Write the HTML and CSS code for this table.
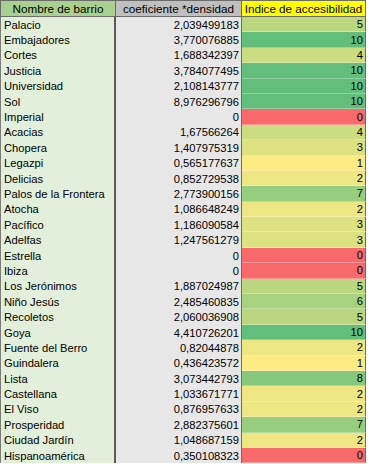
FILE: index.html
```html
<!DOCTYPE html>
<html lang="es">
<head>
<meta charset="utf-8">
<link rel="stylesheet" href="styles.css">
</head>
<body>
<div class="sheet">
  <div class="row head">
    <div class="cell h-name">Nombre de barrio</div>
    <div class="cell h-coef">coeficiente *densidad</div>
    <div class="cell h-idx">Indice de accesibilidad</div>
  </div>
  <div class="row"><div class="cell name">Palacio</div><div class="cell coef">2,039499183</div><div class="cell idx" style="background:#BAD780">5</div></div>
  <div class="row"><div class="cell name">Embajadores</div><div class="cell coef">3,770076885</div><div class="cell idx" style="background:#63BE7B">10</div></div>
  <div class="row"><div class="cell name">Cortes</div><div class="cell coef">1,688342397</div><div class="cell idx" style="background:#CBDC81">4</div></div>
  <div class="row"><div class="cell name">Justicia</div><div class="cell coef">3,784077495</div><div class="cell idx" style="background:#63BE7B">10</div></div>
  <div class="row"><div class="cell name">Universidad</div><div class="cell coef">2,108143777</div><div class="cell idx" style="background:#63BE7B">10</div></div>
  <div class="row"><div class="cell name">Sol</div><div class="cell coef">8,976296796</div><div class="cell idx" style="background:#63BE7B">10</div></div>
  <div class="row"><div class="cell name">Imperial</div><div class="cell coef">0</div><div class="cell idx" style="background:#F8696B">0</div></div>
  <div class="row"><div class="cell name">Acacias</div><div class="cell coef">1,67566264</div><div class="cell idx" style="background:#CBDC81">4</div></div>
  <div class="row"><div class="cell name">Chopera</div><div class="cell coef">1,407975319</div><div class="cell idx" style="background:#DCE182">3</div></div>
  <div class="row"><div class="cell name">Legazpi</div><div class="cell coef">0,565177637</div><div class="cell idx" style="background:#FFEB84">1</div></div>
  <div class="row"><div class="cell name">Delicias</div><div class="cell coef">0,852729538</div><div class="cell idx" style="background:#EEE683">2</div></div>
  <div class="row"><div class="cell name">Palos de la Frontera</div><div class="cell coef">2,773900156</div><div class="cell idx" style="background:#97CD7E">7</div></div>
  <div class="row"><div class="cell name">Atocha</div><div class="cell coef">1,086648249</div><div class="cell idx" style="background:#EEE683">2</div></div>
  <div class="row"><div class="cell name">Pacífico</div><div class="cell coef">1,186090584</div><div class="cell idx" style="background:#DCE182">3</div></div>
  <div class="row"><div class="cell name">Adelfas</div><div class="cell coef">1,247561279</div><div class="cell idx" style="background:#DCE182">3</div></div>
  <div class="row"><div class="cell name">Estrella</div><div class="cell coef">0</div><div class="cell idx" style="background:#F8696B">0</div></div>
  <div class="row"><div class="cell name">Ibiza</div><div class="cell coef">0</div><div class="cell idx" style="background:#F8696B">0</div></div>
  <div class="row"><div class="cell name">Los Jerónimos</div><div class="cell coef">1,887024987</div><div class="cell idx" style="background:#BAD780">5</div></div>
  <div class="row"><div class="cell name">Niño Jesús</div><div class="cell coef">2,485460835</div><div class="cell idx" style="background:#A8D27F">6</div></div>
  <div class="row"><div class="cell name">Recoletos</div><div class="cell coef">2,060036908</div><div class="cell idx" style="background:#BAD780">5</div></div>
  <div class="row"><div class="cell name">Goya</div><div class="cell coef">4,410726201</div><div class="cell idx" style="background:#63BE7B">10</div></div>
  <div class="row"><div class="cell name">Fuente del Berro</div><div class="cell coef">0,82044878</div><div class="cell idx" style="background:#EEE683">2</div></div>
  <div class="row"><div class="cell name">Guindalera</div><div class="cell coef">0,436423572</div><div class="cell idx" style="background:#FFEB84">1</div></div>
  <div class="row"><div class="cell name">Lista</div><div class="cell coef">3,073442793</div><div class="cell idx" style="background:#86C87D">8</div></div>
  <div class="row"><div class="cell name">Castellana</div><div class="cell coef">1,033671771</div><div class="cell idx" style="background:#EEE683">2</div></div>
  <div class="row"><div class="cell name">El Viso</div><div class="cell coef">0,876957633</div><div class="cell idx" style="background:#EEE683">2</div></div>
  <div class="row"><div class="cell name">Prosperidad</div><div class="cell coef">2,882375601</div><div class="cell idx" style="background:#97CD7E">7</div></div>
  <div class="row"><div class="cell name">Ciudad Jardín</div><div class="cell coef">1,048687159</div><div class="cell idx" style="background:#EEE683">2</div></div>
  <div class="row"><div class="cell name">Hispanoamérica</div><div class="cell coef">0,350108323</div><div class="cell idx" style="background:#F8696B">0</div></div>
</div>
</body>
</html>
```

FILE: styles.css
```css
html, body {
  margin: 0;
  padding: 0;
  background: #ffffff;
}

body {
  font-family: "Liberation Sans", Arial, sans-serif;
  font-size: 11.2px;
  color: #000000;
}

.sheet {
  width: 366px;
  display: flex;
  flex-direction: column;
}

.row {
  display: grid;
  grid-template-columns: 116px 126px 124px;
  height: 15.4px;
}

.row.head {
  height: 17px;
  font-size: 11.7px;
}

.cell {
  box-sizing: border-box;
  display: flex;
  align-items: center;
  white-space: nowrap;
  overflow: hidden;
  padding: 0 2px 0 3px;
}

.head .cell {
  justify-content: center;
  border-top: 1px solid #6b6b6b;
  border-bottom: 1px solid #6b6b6b;
  border-right: 1px solid #6b6b6b;
  padding: 0 1px;
}

.h-name { background: #A9D08E; border-left: 1px solid #6b6b6b; }
.h-coef { background: #BFBFBF; }
.h-idx  { background: #FFFF00; }

.name {
  background: #E2EFDA;
  border-left: 1px solid #7a7a7a;
  border-right: 2px solid #5a5a5a;
}

.coef {
  background: #E7E7E7;
  justify-content: flex-end;
  border-right: 1px solid #6b6b6b;
}

.idx {
  justify-content: flex-end;
  border-right: 1px solid #6b6b6b;
  border-bottom: 1px solid rgba(255, 255, 255, 0.3);
}
```
